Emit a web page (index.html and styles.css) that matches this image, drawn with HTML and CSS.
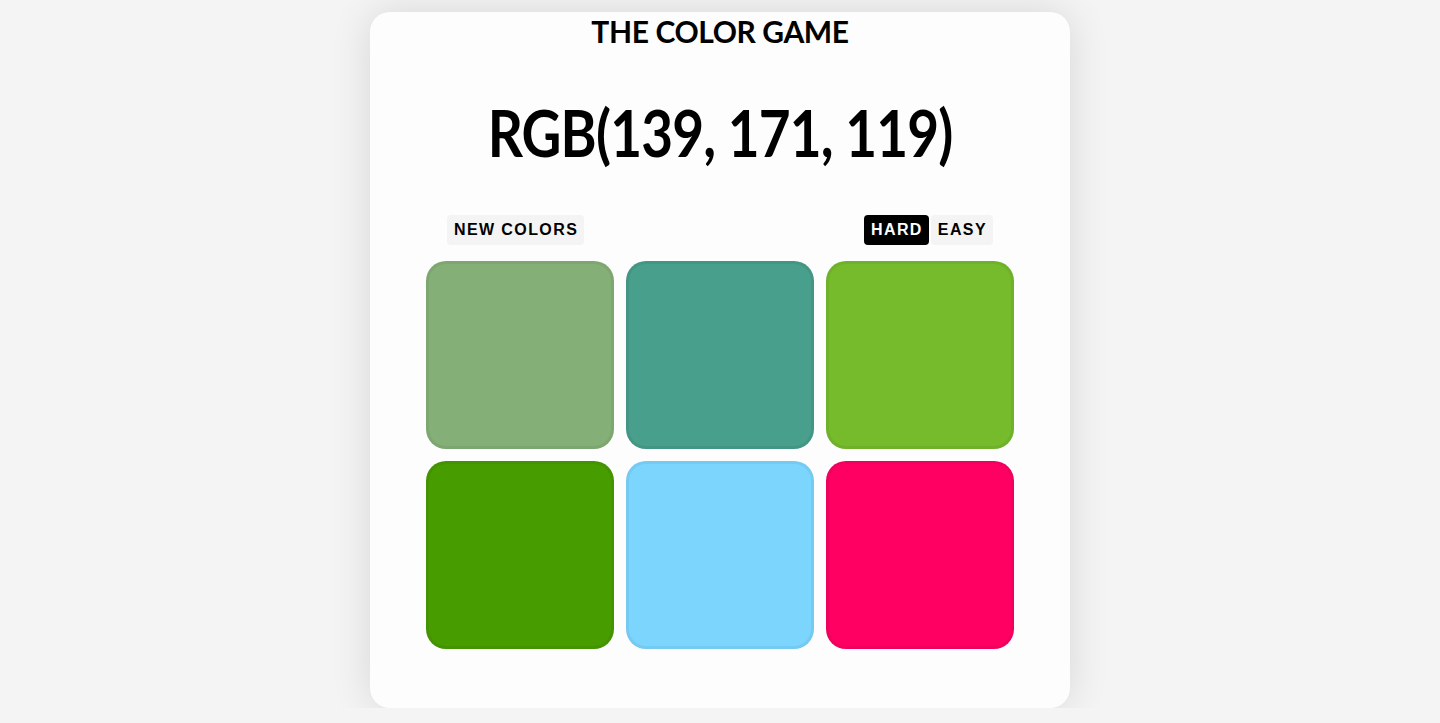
FILE: index.html
```html
<!DOCTYPE html>
<html>
<head>
<meta charset="utf-8">
<link rel="stylesheet" href="styles.css">
</head>
<body>
<main class="card">
  <h1 class="title">THE COLOR GAME</h1>
  <div class="rgb-wrap"><h2 class="rgb">RGB(139, 171, 119)</h2></div>
  <div class="controls">
    <button class="btn">NEW COLORS</button>
    <div class="modes">
      <button class="btn active">HARD</button>
      <button class="btn">EASY</button>
    </div>
  </div>
  <div class="grid">
    <div class="tile" style="background:#84af76"></div>
    <div class="tile" style="background:#479f8c"></div>
    <div class="tile" style="background:#75bb2b"></div>
    <div class="tile" style="background:#479c00"></div>
    <div class="tile" style="background:#7bd5fd"></div>
    <div class="tile" style="background:#ff0062"></div>
  </div>
</main>
</body>
</html>
```
FILE: styles.css
```css
html, body {
  margin: 0;
  padding: 0;
  background: #f4f4f4;
}
body {
  padding-top: 12px;
  font-family: "Lato", "Open Sans", sans-serif;
}
.card {
  width: 700px;
  height: 696px;
  margin: 0 auto;
  background: #fdfdfd;
  border-radius: 20px;
  box-shadow: 0 0 40px rgba(0, 0, 0, 0.12);
  box-sizing: border-box;
  padding: 1px 56px 0;
  display: flex;
  flex-direction: column;
  align-items: stretch;
}
.title {
  margin: 0;
  text-align: center;
  font-size: 30px;
  font-weight: 700;
  line-height: 36px;
  letter-spacing: -0.4px;
  color: #000;
  white-space: nowrap;
}
.rgb-wrap {
  margin-top: 44px;
  display: flex;
  justify-content: center;
}
.rgb {
  margin: 0;
  display: inline-block;
  white-space: nowrap;
  font-size: 65px;
  font-weight: 700;
  line-height: 78px;
  letter-spacing: -1px;
  color: #000;
  transform: scaleX(0.845);
}
.controls {
  margin-top: 44px;
  padding: 0 21px;
  display: flex;
  justify-content: space-between;
  align-items: center;
}
.modes {
  display: flex;
  gap: 2px;
}
.btn {
  font-family: "Liberation Sans", Arial, sans-serif;
  font-weight: 700;
  font-size: 16px;
  letter-spacing: 1.4px;
  height: 30px;
  padding: 0 6px 0 7px;
  border: none;
  border-radius: 4px;
  background: #f4f4f4;
  color: #000;
}
.btn.active {
  background: #000;
  color: #fff;
}
.grid {
  margin-top: 16px;
  display: grid;
  grid-template-columns: repeat(3, 188px);
  grid-auto-rows: 188px;
  gap: 12px;
}
.tile {
  border-radius: 20px;
  box-sizing: border-box;
  border: 3px solid rgba(0, 0, 0, 0.05);
}
```
